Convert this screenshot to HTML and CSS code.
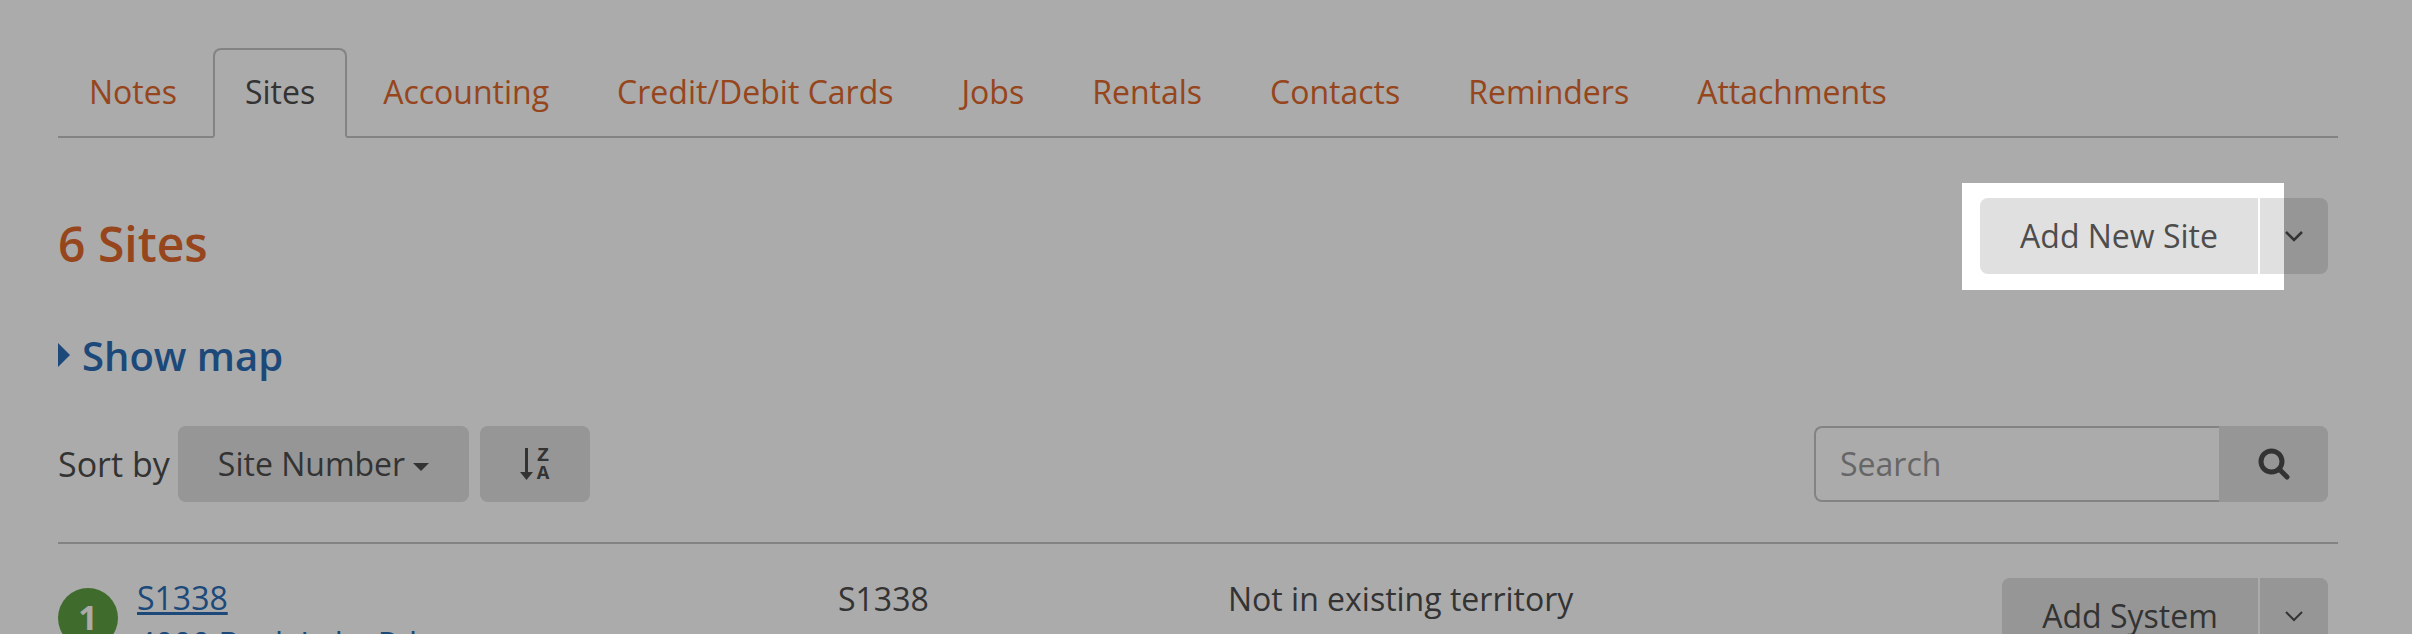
FILE: index.html
```html
<!DOCTYPE html>
<html lang="en">
<head>
    <meta charset="UTF-8">
    <title>Sites</title>
    <link rel="stylesheet" href="styles.css">
</head>
<body>
    <div class="page">
        <ul class="tabs">
            <li><a href="#">Notes</a></li>
            <li class="active"><a href="#">Sites</a></li>
            <li><a href="#">Accounting</a></li>
            <li><a href="#">Credit/Debit Cards</a></li>
            <li><a href="#">Jobs</a></li>
            <li><a href="#">Rentals</a></li>
            <li><a href="#">Contacts</a></li>
            <li><a href="#">Reminders</a></li>
            <li><a href="#">Attachments</a></li>
        </ul>

        <div class="heading-row">
            <h2>6 Sites</h2>
            <div class="split-btn split-btn-main">
                <button class="btn">Add New Site</button>
                <button class="btn btn-caret">
                    <svg class="chevron" viewBox="0 0 20 12"><path d="M2 2l8 8 8-8"/></svg>
                </button>
            </div>
        </div>

        <a class="map-toggle" href="#"><span class="arrow"></span>Show map</a>

        <div class="toolbar">
            <div class="sort">
                <span class="sort-label">Sort by</span>
                <button class="btn btn-sort">Site Number<span class="caret"></span></button>
                <button class="btn btn-order">
                    <svg class="sort-icon" viewBox="0 0 31 32">
                        <path class="sort-arrow" d="M5 0h3v24h5l-6.500 8L0 24h5z"/>
                        <text x="23" y="13">Z</text>
                        <text x="23" y="31">A</text>
                    </svg>
                </button>
            </div>
            <div class="search">
                <input type="text" placeholder="Search">
                <button class="btn btn-search">
                    <svg class="search-icon" viewBox="0 0 32 32"><circle cx="13.500" cy="13.500" r="10.500"/><path d="m21 21 8 8"/></svg>
                </button>
            </div>
        </div>

        <div class="site-row">
            <div class="site-main">
                <span class="pin">1</span>
                <div class="site-name">
                    <a href="#">S1338</a>
                    <a class="address" href="#">4000 Beek Lake Rd</a>
                </div>
            </div>
            <div class="site-number">S1338</div>
            <div class="site-territory">Not in existing territory</div>
            <div class="split-btn">
                <button class="btn btn-system">Add System</button>
                <button class="btn btn-caret">
                    <svg class="chevron chevron-thin" viewBox="0 0 20 12"><path d="M2 2l8 8 8-8"/></svg>
                </button>
            </div>
        </div>
    </div>

    <div class="spotlight"></div>
</body>
</html>
```

FILE: styles.css
```css
/* Global reset */
* {
    margin: 0;
    padding: 0;
    box-sizing: border-box;
}

html, body {
    height: 100%;
    overflow: hidden;
}

body {
    font-family: 'Open Sans', sans-serif;
    font-size: 32px;
    background: #fff;
    color: #4d4d4d;
}

.page {
    padding: 48px 74px 0 58px;
}

/* Tabs */
.tabs {
    display: flex;
    list-style: none;
    height: 90px;
    border-bottom: 2px solid #c4c4c4;
}

.tabs li {
    height: 90px;
    margin-right: 4px;
    border: 2px solid transparent;
    border-radius: 8px 8px 0 0;
}

.tabs li:first-child {
    margin-left: -1px;
}

.tabs a {
    display: block;
    padding: 0 30px;
    line-height: 84px;
    color: #e0682b;
    text-decoration: none;
    white-space: nowrap;
}

.tabs .active {
    border-color: #c4c4c4;
    border-bottom-color: #fff;
}

.tabs .active a {
    color: #4d4d4d;
}

/* Heading row */
.heading-row {
    display: flex;
    justify-content: space-between;
    align-items: flex-start;
    padding: 60px 10px 0 0;
}

h2 {
    margin-top: 8px;
    color: #e0682b;
    font-size: 48px;
    font-weight: 600;
    line-height: 76px;
}

/* Buttons */
.btn {
    height: 76px;
    padding-bottom: 2px;
    border: none;
    background: #e0e0e0;
    border-radius: 8px;
    font-family: inherit;
    font-size: 32px;
    color: #4d4d4d;
}

.split-btn {
    display: flex;
    gap: 2px;
}

.split-btn .btn:first-child {
    border-radius: 8px 0 0 8px;
}

.split-btn .btn-caret {
    display: flex;
    align-items: center;
    justify-content: center;
    width: 68px;
    padding-bottom: 0;
    border-radius: 0 8px 8px 0;
}

.split-btn-main .btn:first-child {
    width: 278px;
}

.chevron {
    width: 20px;
    height: 12px;
    fill: none;
    stroke: #4d4d4d;
    stroke-width: 2.500;
}

.chevron-thin {
    stroke-width: 2;
}

/* Show map */
.map-toggle {
    display: flex;
    align-items: center;
    margin-top: 44px;
    height: 58px;
    font-size: 40px;
    font-weight: 600;
    color: #2a6db5;
    text-decoration: none;
}

.arrow {
    width: 0;
    height: 0;
    margin-right: 12px;
    border-left: 12px solid #2a6db5;
    border-top: 12px solid transparent;
    border-bottom: 12px solid transparent;
}

/* Sort and search */
.toolbar {
    display: flex;
    justify-content: space-between;
    margin-top: 42px;
    padding: 0 10px 40px 0;
    border-bottom: 2px solid #c4c4c4;
}

.sort {
    display: flex;
    align-items: center;
}

.sort-label {
    width: 120px;
    font-size: 34px;
}

.btn-sort {
    width: 291px;
    margin-right: 11px;
}

.caret {
    display: inline-block;
    margin-left: 8px;
    vertical-align: middle;
    border-top: 8px solid #4d4d4d;
    border-left: 8px solid transparent;
    border-right: 8px solid transparent;
}

.btn-order {
    width: 110px;
    padding-bottom: 0;
    display: flex;
    align-items: center;
    justify-content: center;
}

.sort-icon {
    width: 31px;
    height: 32px;
}

.sort-arrow {
    fill: #4d4d4d;
}

.sort-icon text {
    font-family: 'Liberation Mono', monospace;
    font-size: 21px;
    font-weight: bold;
    text-anchor: middle;
    fill: #4d4d4d;
}

.search {
    display: flex;
}

.search input {
    width: 405px;
    height: 76px;
    padding: 0 24px 2px;
    border: 2px solid #c4c4c4;
    border-right: none;
    border-radius: 8px 0 0 8px;
    outline: none;
    font-family: inherit;
    font-size: 32px;
    color: #4d4d4d;
}

.search input::placeholder {
    color: #999;
    opacity: 1;
}

.btn-search {
    width: 109px;
    padding-bottom: 0;
    border-radius: 0 8px 8px 0;
    display: flex;
    align-items: center;
    justify-content: center;
}

.search-icon {
    width: 32px;
    height: 32px;
    fill: none;
    stroke: #4d4d4d;
    stroke-width: 5;
    stroke-linecap: round;
}

/* Site rows */
.site-row {
    display: flex;
    align-items: flex-start;
    padding: 34px 10px 0 0;
}

.site-main {
    display: flex;
    width: 780px;
    padding-top: 10px;
}

.pin {
    flex: none;
    width: 60px;
    height: 60px;
    margin-right: 19px;
    border-radius: 50%;
    background: #5fa042;
    color: #fff;
    font-size: 34px;
    font-weight: 700;
    text-align: center;
    line-height: 58px;
}

.site-name {
    line-height: 46px;
    margin-top: -13px;
}

.site-name a {
    display: block;
    width: fit-content;
    color: #2a6db5;
}

.site-name .address {
    text-decoration: none;
}

.site-number {
    width: 390px;
    line-height: 42px;
}

.site-territory {
    width: 774px;
    line-height: 42px;
}

.btn-system {
    width: 256px;
}

/* Highlight over the page */
.spotlight {
    position: absolute;
    left: 1962px;
    top: 183px;
    width: 322px;
    height: 107px;
    box-shadow: 0 0 0 3000px rgba(0, 0, 0, 0.33);
}
```
